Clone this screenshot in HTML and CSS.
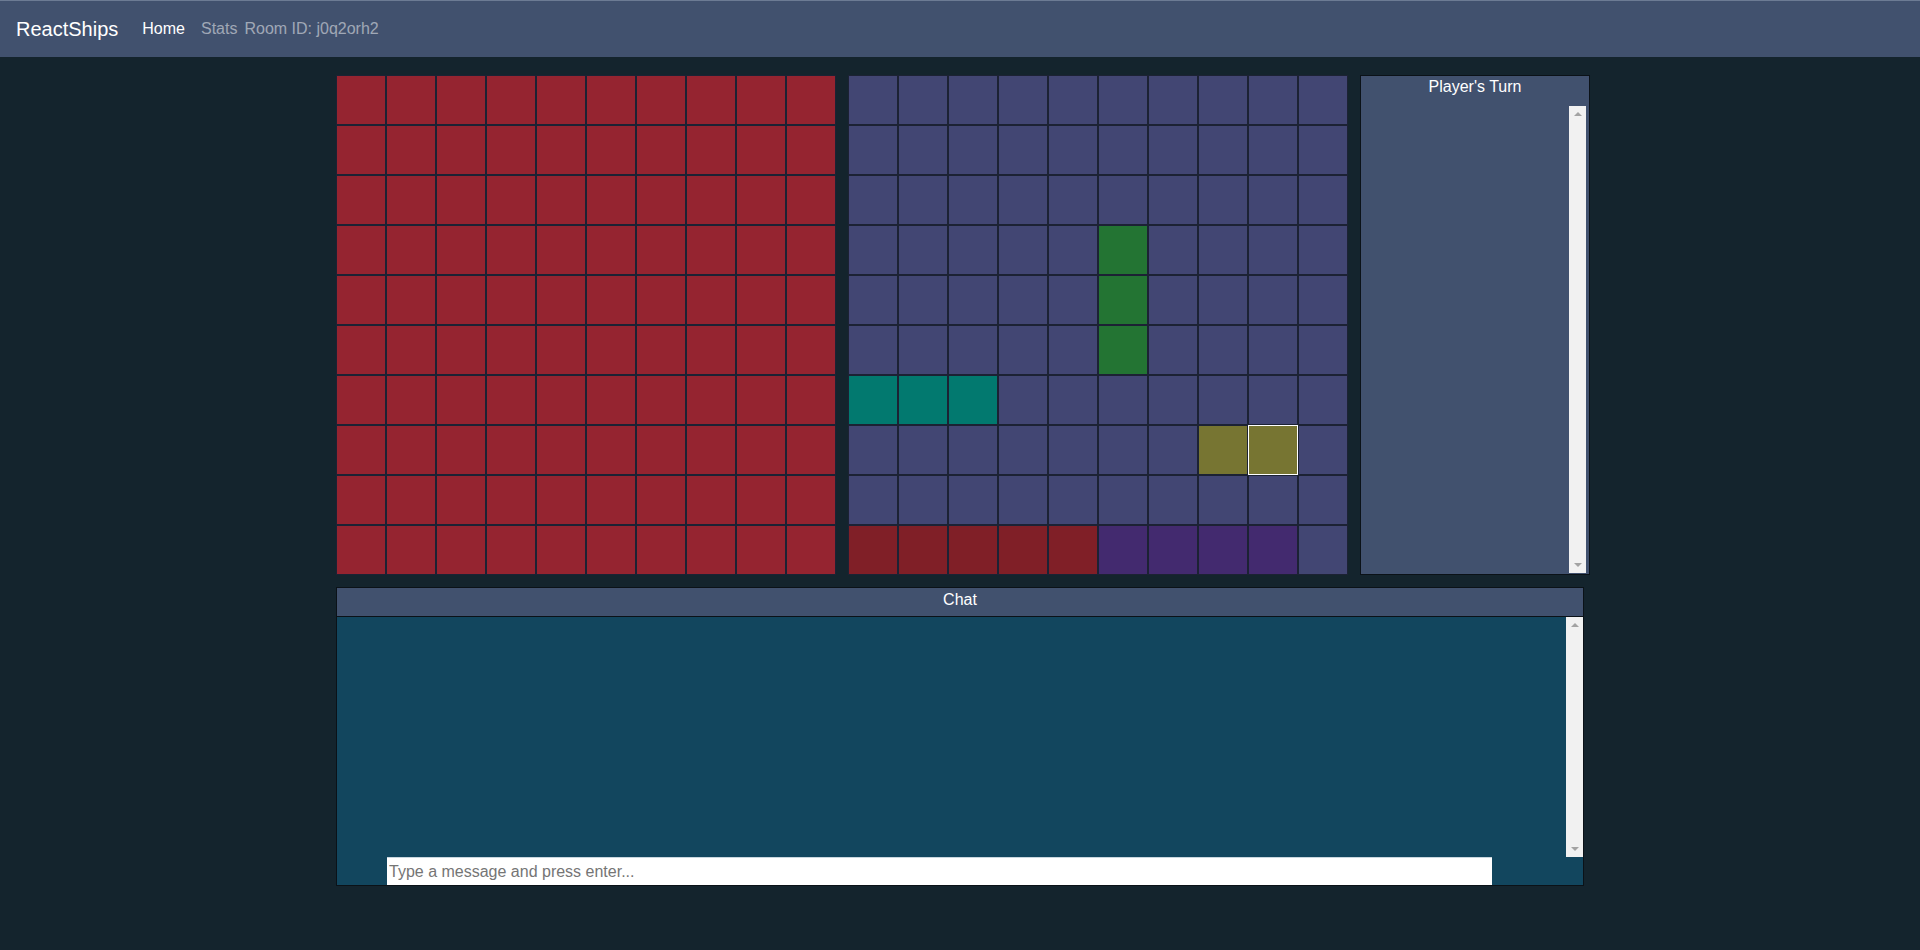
FILE: index.html
```html
<!DOCTYPE html>
<html>
<head>
<meta charset="utf-8">
<title>ReactShips</title>
<link rel="stylesheet" href="styles.css">
</head>
<body>
<nav class="navbar">
  <span class="brand">ReactShips</span>
  <a class="nav-link active">Home</a>
  <a class="nav-link">Stats</a>
  <span class="room">Room ID: j0q2orh2</span>
</nav>
<main class="main">
  <div class="top-row">
    <div class="board" id="b1"></div>
    <div class="board" id="b2"></div>
    <div class="turn-panel">
      <div class="turn-title">Player's Turn</div>
      <div class="turn-body">
        <div class="log"></div>
        <div class="scrollbar"><span class="arrow up"></span><span class="arrow down"></span></div>
      </div>
    </div>
  </div>
  <div class="chat">
    <div class="chat-header">Chat</div>
    <div class="chat-body">
      <div class="messages"></div>
      <div class="scrollbar"><span class="arrow up"></span><span class="arrow down"></span></div>
    </div>
    <div class="chat-input-row">
      <input class="chat-input" type="text" placeholder="Type a message and press enter...">
    </div>
  </div>
</main>
<script>
  var b1 = document.getElementById('b1');
  var b2 = document.getElementById('b2');
  var ships = {
    '3-5':'green','4-5':'green','5-5':'green',
    '6-0':'teal','6-1':'teal','6-2':'teal',
    '7-7':'olive','7-8':'olive sel',
    '9-0':'crimson','9-1':'crimson','9-2':'crimson','9-3':'crimson','9-4':'crimson',
    '9-5':'purple','9-6':'purple','9-7':'purple','9-8':'purple'
  };
  for (var r = 0; r < 10; r++) {
    for (var c = 0; c < 10; c++) {
      var a = document.createElement('div');
      a.className = 'cell enemy';
      b1.appendChild(a);
      var d = document.createElement('div');
      d.className = 'cell own ' + (ships[r + '-' + c] || '');
      b2.appendChild(d);
    }
  }
</script>
</body>
</html>
```

FILE: styles.css
```css
html, body {
  margin: 0;
  padding: 0;
}
body {
  background: #14242d;
  font-family: "Liberation Sans", Arial, sans-serif;
  font-size: 16px;
  color: #fff;
  height: 950px;
  overflow: hidden;
}
.navbar {
  height: 57px;
  box-sizing: border-box;
  border-top: 1px solid #6c7b94;
  background: #41516e;
  display: flex;
  align-items: center;
  padding: 0 16px;
}
.brand {
  font-size: 20px;
  color: #fff;
  margin-right: 16px;
}
.nav-link {
  padding: 0 8px;
  color: rgba(255,255,255,0.5);
  text-decoration: none;
}
.nav-link.active {
  color: #fff;
  padding: 0 8px 0 8px;
}
.room {
  color: rgba(255,255,255,0.5);
  margin-left: -1px;
}
.main {
  width: 1254px;
  margin: 18px 0 0 336px;
}
.top-row {
  display: flex;
  gap: 12px;
  align-items: flex-start;
}
.board {
  display: grid;
  grid-template-columns: repeat(10, 50px);
  grid-template-rows: repeat(10, 50px);
}
.cell {
  box-sizing: border-box;
  border: 1px solid #1c2234;
}
.enemy { background: #952430; }
.own { background: #424673; }
.own.green { background: #237433; }
.own.teal { background: #02796f; }
.own.olive { background: #777532; }
.own.crimson { background: #801f27; }
.own.purple { background: #432a6f; }
.own.sel { border-color: #ffffff; }
.turn-panel {
  width: 230px;
  height: 500px;
  box-sizing: border-box;
  background: #41516e;
  border: 1px solid #0b1218;
  display: flex;
  flex-direction: column;
}
.turn-title {
  text-align: center;
  height: 30px;
  line-height: 18px;
  padding-top: 2px;
  box-sizing: border-box;
  color: #fff;
  font-size: 16px;
}
.turn-body {
  flex: 1;
  display: flex;
  margin: 0 3px 1px 3px;
}
.log {
  flex: 1;
}
.scrollbar {
  width: 17px;
  background: #f1f1f1;
  display: flex;
  flex-direction: column;
  justify-content: space-between;
  align-items: center;
  padding: 6px 0;
  box-sizing: border-box;
}
.arrow {
  width: 0;
  height: 0;
  border-left: 4px solid transparent;
  border-right: 4px solid transparent;
}
.arrow.up { border-bottom: 4px solid #a3a3a3; }
.arrow.down { border-top: 4px solid #a3a3a3; }
.chat {
  margin-top: 12px;
  width: 1248px;
  box-sizing: border-box;
  border: 1px solid #0b1218;
  background: #12465e;
}
.chat-header {
  height: 29px;
  line-height: 20px;
  padding-top: 2px;
  box-sizing: border-box;
  background: #41516e;
  border-bottom: 1px solid #0b1218;
  text-align: center;
  color: #fff;
  font-size: 16px;
}
.chat-body {
  height: 240px;
  display: flex;
}
.messages {
  flex: 1;
}
.chat-input-row {
  display: flex;
  padding-left: 50px;
}
.chat-input {
  width: 1105px;
  height: 28px;
  box-sizing: border-box;
  border: none;
  border-top: 1px solid #c8d6de;
  margin: 0;
  padding: 0 2px;
  font-family: "Liberation Sans", Arial, sans-serif;
  font-size: 16px;
  background: #fff;
  color: #333;
  outline: none;
}
.chat-input::placeholder {
  color: #757575;
}
```
